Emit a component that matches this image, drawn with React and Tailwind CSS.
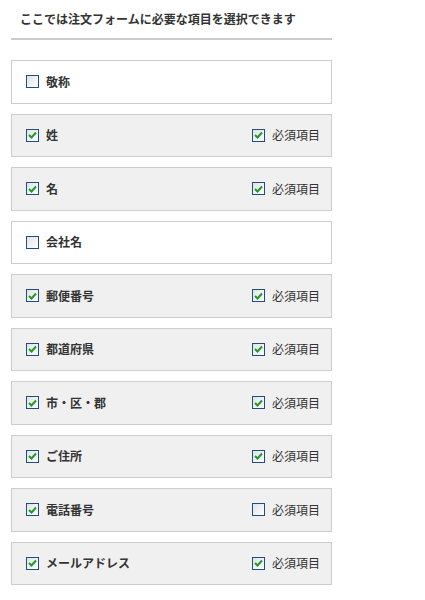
import React from 'react';

const fields = [
    { id: 'title', label: '敬称', checked: false },
    { id: 'last', label: '姓', checked: true, required: true },
    { id: 'first', label: '名', checked: true, required: true },
    { id: 'company', label: '会社名', checked: false },
    { id: 'zip', label: '郵便番号', checked: true, required: true },
    { id: 'pref', label: '都道府県', checked: true, required: true },
    { id: 'city', label: '市・区・郡', checked: true, required: true },
    { id: 'addr', label: 'ご住所', checked: true, required: true },
    { id: 'tel', label: '電話番号', checked: true, required: false },
    { id: 'mail', label: 'メールアドレス', checked: true, required: true },
];

const Box = ({ checked }) => (
    <span className="w-[13px] h-[13px] flex-shrink-0 border border-[#1f4e85] bg-gradient-to-br from-[#e2e2e2] to-white flex items-center justify-center">
        {checked && (
            <svg width="9" height="8" viewBox="0 0 9 8">
                <path d="M1 4 L3.5 6.5 L8 1.5" fill="none" stroke="#1f9a24" strokeWidth="2" />
            </svg>
        )}
    </span>
);

export default function App() {
    return (
        <div className="bg-white min-h-[600px] text-[#333] text-[12px]" style={{ fontFamily: '"Noto Sans CJK JP", sans-serif' }}>
            <div className="ml-[11px] w-[321px]">
                <div className="h-[40px] border-b-2 border-[#cccccc] flex items-center pl-[9px] font-bold">
                    ここでは注文フォームに必要な項目を選択できます
                </div>
                <div className="mt-[20px] flex flex-col gap-[10px]">
                    {fields.map(f => (
                        <div
                            key={f.id}
                            className={`h-[43.5px] border border-[#cccccc] flex items-center pl-[14px] pr-[11px] ${f.checked ? 'bg-[#f0f0f0]' : 'bg-white'}`}
                        >
                            <Box checked={f.checked} />
                            <span className="ml-[7px] font-bold leading-none">{f.label}</span>
                            {f.checked && (
                                <div className="ml-auto flex items-center">
                                    <Box checked={f.required} />
                                    <span className="ml-[7px] leading-none">必須項目</span>
                                </div>
                            )}
                        </div>
                    ))}
                </div>
            </div>
        </div>
    );
}
